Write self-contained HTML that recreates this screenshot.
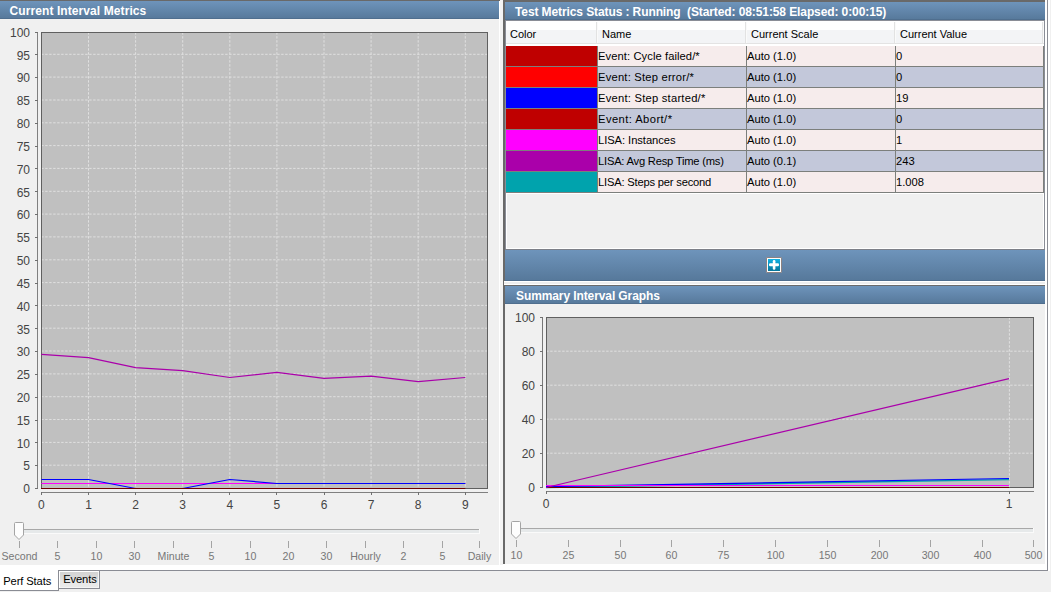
<!DOCTYPE html><html><head><meta charset="utf-8"><style>
html,body{margin:0;padding:0;}
body{width:1051px;height:592px;overflow:hidden;background:#f0f0f0;position:relative;font-family:"Liberation Sans", sans-serif;}
.abs{position:absolute;}
.title{position:absolute;color:#fff;font-weight:bold;font-size:12px;line-height:14px;white-space:nowrap;letter-spacing:-0.1px;}
.hdr{position:absolute;background:linear-gradient(#6e94bb,#56789a);}
.t{position:absolute;white-space:nowrap;}
</style></head><body>

<div class="abs" style="left:0;top:0;width:1047px;height:570px;background:#fff;"></div>
<div class="abs" style="left:1047px;top:0;width:1px;height:571px;background:#8a8c94;"></div>
<div class="abs" style="left:1048px;top:0;width:2px;height:571px;background:#fff;"></div>
<div class="abs" style="left:0;top:570px;width:1048px;height:1px;background:#8a8c94;"></div>
<div class="abs" style="left:0;top:0;width:499px;height:565px;background:#f0f0f0;"></div>
<div class="abs" style="left:0;top:0;width:500px;height:1px;background:#696969;"></div>
<div class="hdr" style="left:0;top:1px;width:499px;height:18px;"></div>
<div class="abs" style="left:0;top:18px;width:499px;height:1px;background:#4f6e8e;"></div>
<div class="title" style="left:9.5px;top:4px;letter-spacing:0.09px;">Current Interval Metrics</div>
<div class="abs" style="left:500px;top:0;width:3px;height:565px;background:#f3f3f3;"></div>
<div class="abs" style="left:503px;top:0;width:542px;height:564px;background:#f0f0f0;"></div>
<div class="abs" style="left:503px;top:0;width:2px;height:564px;background:#696969;"></div>
<div class="abs" style="left:503px;top:0;width:542px;height:2px;background:#696969;"></div>
<div class="hdr" style="left:505px;top:2px;width:540px;height:18px;"></div>
<div class="abs" style="left:505px;top:19px;width:540px;height:1px;background:#4f6e8e;"></div>
<div class="abs" style="left:1045px;top:0px;width:2px;height:565px;background:#fff;"></div>
<div class="title" style="left:515px;top:5px;">Test Metrics Status : Running&nbsp; (Started: 08:51:58 Elapsed: 0:00:15)</div>
<div class="abs" style="left:505px;top:20px;width:540px;height:230px;box-sizing:border-box;border:1px solid #8a8d96;background:#fff;"></div>
<div class="abs" style="left:507px;top:194px;width:536px;height:54px;background:#f0f0f0;"></div>
<div class="abs" style="left:506px;top:21px;width:538px;height:25px;background:linear-gradient(#fff 0,#fff 9px,#f3f4f6 9px,#f3f4f6 22px,#e3e3e3 22px,#e3e3e3 23px,#fff 23px);"></div>
<div class="abs" style="left:596px;top:22px;width:1px;height:21px;background:#e2e2e2;"></div>
<div class="abs" style="left:597px;top:22px;width:1px;height:21px;background:#fafafa;"></div>
<div class="t" style="left:510px;top:28px;font-size:11px;line-height:13px;color:#000;">Color</div>
<div class="abs" style="left:745px;top:22px;width:1px;height:21px;background:#e2e2e2;"></div>
<div class="abs" style="left:746px;top:22px;width:1px;height:21px;background:#fafafa;"></div>
<div class="t" style="left:602px;top:28px;font-size:11px;line-height:13px;color:#000;">Name</div>
<div class="abs" style="left:894px;top:22px;width:1px;height:21px;background:#e2e2e2;"></div>
<div class="abs" style="left:895px;top:22px;width:1px;height:21px;background:#fafafa;"></div>
<div class="t" style="left:751px;top:28px;font-size:11px;line-height:13px;color:#000;">Current Scale</div>
<div class="abs" style="left:1042px;top:22px;width:1px;height:21px;background:#e2e2e2;"></div>
<div class="abs" style="left:1043px;top:22px;width:1px;height:21px;background:#fafafa;"></div>
<div class="t" style="left:900px;top:28px;font-size:11px;line-height:13px;color:#000;">Current Value</div>
<div class="abs" style="left:506px;top:46px;width:538px;height:147px;background:#7c7f7c;"></div>
<div class="abs" style="left:506px;top:46px;width:91px;height:20px;background:#bf0000;"></div>
<div class="abs" style="left:598px;top:46px;width:148px;height:20px;background:#f6ecec;"></div>
<div class="t" style="left:598px;top:50px;font-size:11.2px;line-height:13px;color:#000;letter-spacing:0.08px;">Event: Cycle failed/*</div>
<div class="abs" style="left:747px;top:46px;width:148px;height:20px;background:#f6ecec;"></div>
<div class="t" style="left:747px;top:50px;font-size:11.2px;line-height:13px;color:#000;letter-spacing:0px;">Auto (1.0)</div>
<div class="abs" style="left:896px;top:46px;width:147px;height:20px;background:#f6ecec;"></div>
<div class="t" style="left:896px;top:50px;font-size:11.2px;line-height:13px;color:#000;letter-spacing:0px;">0</div>
<div class="abs" style="left:506px;top:67px;width:91px;height:20px;background:#ff0000;"></div>
<div class="abs" style="left:598px;top:67px;width:148px;height:20px;background:#c3c8da;"></div>
<div class="t" style="left:598px;top:71px;font-size:11.2px;line-height:13px;color:#000;letter-spacing:0.21px;">Event: Step error/*</div>
<div class="abs" style="left:747px;top:67px;width:148px;height:20px;background:#c3c8da;"></div>
<div class="t" style="left:747px;top:71px;font-size:11.2px;line-height:13px;color:#000;letter-spacing:0px;">Auto (1.0)</div>
<div class="abs" style="left:896px;top:67px;width:147px;height:20px;background:#c3c8da;"></div>
<div class="t" style="left:896px;top:71px;font-size:11.2px;line-height:13px;color:#000;letter-spacing:0px;">0</div>
<div class="abs" style="left:506px;top:88px;width:91px;height:20px;background:#0000ff;"></div>
<div class="abs" style="left:598px;top:88px;width:148px;height:20px;background:#f6ecec;"></div>
<div class="t" style="left:598px;top:92px;font-size:11.2px;line-height:13px;color:#000;letter-spacing:0.235px;">Event: Step started/*</div>
<div class="abs" style="left:747px;top:88px;width:148px;height:20px;background:#f6ecec;"></div>
<div class="t" style="left:747px;top:92px;font-size:11.2px;line-height:13px;color:#000;letter-spacing:0px;">Auto (1.0)</div>
<div class="abs" style="left:896px;top:88px;width:147px;height:20px;background:#f6ecec;"></div>
<div class="t" style="left:896px;top:92px;font-size:11.2px;line-height:13px;color:#000;letter-spacing:0px;">19</div>
<div class="abs" style="left:506px;top:109px;width:91px;height:20px;background:#bf0000;"></div>
<div class="abs" style="left:598px;top:109px;width:148px;height:20px;background:#c3c8da;"></div>
<div class="t" style="left:598px;top:113px;font-size:11.2px;line-height:13px;color:#000;letter-spacing:0.43px;">Event: Abort/*</div>
<div class="abs" style="left:747px;top:109px;width:148px;height:20px;background:#c3c8da;"></div>
<div class="t" style="left:747px;top:113px;font-size:11.2px;line-height:13px;color:#000;letter-spacing:0px;">Auto (1.0)</div>
<div class="abs" style="left:896px;top:109px;width:147px;height:20px;background:#c3c8da;"></div>
<div class="t" style="left:896px;top:113px;font-size:11.2px;line-height:13px;color:#000;letter-spacing:0px;">0</div>
<div class="abs" style="left:506px;top:130px;width:91px;height:20px;background:#ff00ff;"></div>
<div class="abs" style="left:598px;top:130px;width:148px;height:20px;background:#f6ecec;"></div>
<div class="t" style="left:598px;top:134px;font-size:11.2px;line-height:13px;color:#000;letter-spacing:-0.06px;">LISA: Instances</div>
<div class="abs" style="left:747px;top:130px;width:148px;height:20px;background:#f6ecec;"></div>
<div class="t" style="left:747px;top:134px;font-size:11.2px;line-height:13px;color:#000;letter-spacing:0px;">Auto (1.0)</div>
<div class="abs" style="left:896px;top:130px;width:147px;height:20px;background:#f6ecec;"></div>
<div class="t" style="left:896px;top:134px;font-size:11.2px;line-height:13px;color:#000;letter-spacing:0px;">1</div>
<div class="abs" style="left:506px;top:151px;width:91px;height:20px;background:#aa00aa;"></div>
<div class="abs" style="left:598px;top:151px;width:148px;height:20px;background:#c3c8da;"></div>
<div class="t" style="left:598px;top:155px;font-size:11.2px;line-height:13px;color:#000;letter-spacing:-0.22px;">LISA: Avg Resp Time (ms)</div>
<div class="abs" style="left:747px;top:151px;width:148px;height:20px;background:#c3c8da;"></div>
<div class="t" style="left:747px;top:155px;font-size:11.2px;line-height:13px;color:#000;letter-spacing:0px;">Auto (0.1)</div>
<div class="abs" style="left:896px;top:151px;width:147px;height:20px;background:#c3c8da;"></div>
<div class="t" style="left:896px;top:155px;font-size:11.2px;line-height:13px;color:#000;letter-spacing:0px;">243</div>
<div class="abs" style="left:506px;top:172px;width:91px;height:20px;background:#00a3ad;"></div>
<div class="abs" style="left:598px;top:172px;width:148px;height:20px;background:#f6ecec;"></div>
<div class="t" style="left:598px;top:176px;font-size:11.2px;line-height:13px;color:#000;letter-spacing:-0.2px;">LISA: Steps per second</div>
<div class="abs" style="left:747px;top:172px;width:148px;height:20px;background:#f6ecec;"></div>
<div class="t" style="left:747px;top:176px;font-size:11.2px;line-height:13px;color:#000;letter-spacing:0px;">Auto (1.0)</div>
<div class="abs" style="left:896px;top:172px;width:147px;height:20px;background:#f6ecec;"></div>
<div class="t" style="left:896px;top:176px;font-size:11.2px;line-height:13px;color:#000;letter-spacing:0px;">1.008</div>
<div class="abs" style="left:505px;top:249px;width:540px;height:1px;background:#7d8088;"></div>
<div class="abs" style="left:505px;top:250px;width:540px;height:31px;background:linear-gradient(#6e94bb,#56789a);"></div>
<div class="abs" style="left:505px;top:280px;width:540px;height:1px;background:#4f6e8e;"></div>
<svg class="abs" style="left:766px;top:257px;" width="16" height="16" viewBox="0 0 16 16">
<defs><linearGradient id="pg" x1="0" y1="0" x2="0" y2="1"><stop offset="0" stop-color="#10b2e4"/><stop offset="1" stop-color="#07759a"/></linearGradient></defs>
<rect x="0.5" y="0.5" width="15" height="15" rx="0.6" fill="#fdfdfd" stroke="#8c8282"/>
<rect x="2" y="2" width="12" height="12" fill="url(#pg)"/>
<rect x="3" y="6.3" width="10" height="3" rx="1.2" fill="#fff"/>
<rect x="6.8" y="3" width="2.6" height="9.8" rx="1.2" fill="#fff"/>
</svg>
<div class="abs" style="left:504px;top:281px;width:541px;height:4px;background:linear-gradient(#fff 0,#fff 1px,#eee 1px,#eee 3px,#fff 3px);"></div>
<div class="abs" style="left:503px;top:285px;width:542px;height:1px;background:#6a6a6a;"></div>
<div class="hdr" style="left:505px;top:286px;width:540px;height:18px;"></div>
<div class="abs" style="left:505px;top:303px;width:540px;height:1px;background:#4f6e8e;"></div>
<div class="title" style="left:516px;top:289px;">Summary Interval Graphs</div>
<svg class="abs" style="left:0;top:0;" width="1051" height="592" viewBox="0 0 1051 592" font-family='"Liberation Sans", sans-serif'>
<rect x="41" y="32" width="447" height="457" fill="#c0c0c0"/>
<line x1="41" y1="465.2" x2="487" y2="465.2" stroke="#e0e0e0" stroke-width="1" stroke-dasharray="2.4,1.6" stroke-dashoffset="-0.2"/>
<line x1="41" y1="442.4" x2="487" y2="442.4" stroke="#e0e0e0" stroke-width="1" stroke-dasharray="2.4,1.6" stroke-dashoffset="-0.2"/>
<line x1="41" y1="419.5" x2="487" y2="419.5" stroke="#e0e0e0" stroke-width="1" stroke-dasharray="2.4,1.6" stroke-dashoffset="-0.2"/>
<line x1="41" y1="396.7" x2="487" y2="396.7" stroke="#e0e0e0" stroke-width="1" stroke-dasharray="2.4,1.6" stroke-dashoffset="-0.2"/>
<line x1="41" y1="373.9" x2="487" y2="373.9" stroke="#e0e0e0" stroke-width="1" stroke-dasharray="2.4,1.6" stroke-dashoffset="-0.2"/>
<line x1="41" y1="351.0" x2="487" y2="351.0" stroke="#e0e0e0" stroke-width="1" stroke-dasharray="2.4,1.6" stroke-dashoffset="-0.2"/>
<line x1="41" y1="328.2" x2="487" y2="328.2" stroke="#e0e0e0" stroke-width="1" stroke-dasharray="2.4,1.6" stroke-dashoffset="-0.2"/>
<line x1="41" y1="305.4" x2="487" y2="305.4" stroke="#e0e0e0" stroke-width="1" stroke-dasharray="2.4,1.6" stroke-dashoffset="-0.2"/>
<line x1="41" y1="282.6" x2="487" y2="282.6" stroke="#e0e0e0" stroke-width="1" stroke-dasharray="2.4,1.6" stroke-dashoffset="-0.2"/>
<line x1="41" y1="259.8" x2="487" y2="259.8" stroke="#e0e0e0" stroke-width="1" stroke-dasharray="2.4,1.6" stroke-dashoffset="-0.2"/>
<line x1="41" y1="236.9" x2="487" y2="236.9" stroke="#e0e0e0" stroke-width="1" stroke-dasharray="2.4,1.6" stroke-dashoffset="-0.2"/>
<line x1="41" y1="214.1" x2="487" y2="214.1" stroke="#e0e0e0" stroke-width="1" stroke-dasharray="2.4,1.6" stroke-dashoffset="-0.2"/>
<line x1="41" y1="191.3" x2="487" y2="191.3" stroke="#e0e0e0" stroke-width="1" stroke-dasharray="2.4,1.6" stroke-dashoffset="-0.2"/>
<line x1="41" y1="168.4" x2="487" y2="168.4" stroke="#e0e0e0" stroke-width="1" stroke-dasharray="2.4,1.6" stroke-dashoffset="-0.2"/>
<line x1="41" y1="145.6" x2="487" y2="145.6" stroke="#e0e0e0" stroke-width="1" stroke-dasharray="2.4,1.6" stroke-dashoffset="-0.2"/>
<line x1="41" y1="122.8" x2="487" y2="122.8" stroke="#e0e0e0" stroke-width="1" stroke-dasharray="2.4,1.6" stroke-dashoffset="-0.2"/>
<line x1="41" y1="100.0" x2="487" y2="100.0" stroke="#e0e0e0" stroke-width="1" stroke-dasharray="2.4,1.6" stroke-dashoffset="-0.2"/>
<line x1="41" y1="77.1" x2="487" y2="77.1" stroke="#e0e0e0" stroke-width="1" stroke-dasharray="2.4,1.6" stroke-dashoffset="-0.2"/>
<line x1="41" y1="54.3" x2="487" y2="54.3" stroke="#e0e0e0" stroke-width="1" stroke-dasharray="2.4,1.6" stroke-dashoffset="-0.2"/>
<line x1="88.5" y1="32" x2="88.5" y2="488" stroke="#e0e0e0" stroke-width="1" stroke-dasharray="2.4,1.6" stroke-dashoffset="-0.2"/>
<line x1="135.6" y1="32" x2="135.6" y2="488" stroke="#e0e0e0" stroke-width="1" stroke-dasharray="2.4,1.6" stroke-dashoffset="-0.2"/>
<line x1="182.7" y1="32" x2="182.7" y2="488" stroke="#e0e0e0" stroke-width="1" stroke-dasharray="2.4,1.6" stroke-dashoffset="-0.2"/>
<line x1="229.8" y1="32" x2="229.8" y2="488" stroke="#e0e0e0" stroke-width="1" stroke-dasharray="2.4,1.6" stroke-dashoffset="-0.2"/>
<line x1="276.9" y1="32" x2="276.9" y2="488" stroke="#e0e0e0" stroke-width="1" stroke-dasharray="2.4,1.6" stroke-dashoffset="-0.2"/>
<line x1="324.0" y1="32" x2="324.0" y2="488" stroke="#e0e0e0" stroke-width="1" stroke-dasharray="2.4,1.6" stroke-dashoffset="-0.2"/>
<line x1="371.1" y1="32" x2="371.1" y2="488" stroke="#e0e0e0" stroke-width="1" stroke-dasharray="2.4,1.6" stroke-dashoffset="-0.2"/>
<line x1="418.2" y1="32" x2="418.2" y2="488" stroke="#e0e0e0" stroke-width="1" stroke-dasharray="2.4,1.6" stroke-dashoffset="-0.2"/>
<line x1="465.3" y1="32" x2="465.3" y2="488" stroke="#e0e0e0" stroke-width="1" stroke-dasharray="2.4,1.6" stroke-dashoffset="-0.2"/>
<rect x="41.5" y="32.5" width="446" height="456" fill="none" stroke="#606060" stroke-width="1"/>
<line x1="37.5" y1="32" x2="37.5" y2="489" stroke="#808080"/>
<line x1="35" y1="488.5" x2="38" y2="488.5" stroke="#707070"/>
<text x="30" y="493" font-size="12" fill="#444" text-anchor="end">0</text>
<line x1="35" y1="465.5" x2="38" y2="465.5" stroke="#707070"/>
<text x="30" y="470" font-size="12" fill="#444" text-anchor="end">5</text>
<line x1="35" y1="442.5" x2="38" y2="442.5" stroke="#707070"/>
<text x="30" y="448" font-size="12" fill="#444" text-anchor="end">10</text>
<line x1="35" y1="420.5" x2="38" y2="420.5" stroke="#707070"/>
<text x="30" y="425" font-size="12" fill="#444" text-anchor="end">15</text>
<line x1="35" y1="397.5" x2="38" y2="397.5" stroke="#707070"/>
<text x="30" y="402" font-size="12" fill="#444" text-anchor="end">20</text>
<line x1="35" y1="374.5" x2="38" y2="374.5" stroke="#707070"/>
<text x="30" y="379" font-size="12" fill="#444" text-anchor="end">25</text>
<line x1="35" y1="351.5" x2="38" y2="351.5" stroke="#707070"/>
<text x="30" y="356" font-size="12" fill="#444" text-anchor="end">30</text>
<line x1="35" y1="328.5" x2="38" y2="328.5" stroke="#707070"/>
<text x="30" y="334" font-size="12" fill="#444" text-anchor="end">35</text>
<line x1="35" y1="305.5" x2="38" y2="305.5" stroke="#707070"/>
<text x="30" y="311" font-size="12" fill="#444" text-anchor="end">40</text>
<line x1="35" y1="283.5" x2="38" y2="283.5" stroke="#707070"/>
<text x="30" y="288" font-size="12" fill="#444" text-anchor="end">45</text>
<line x1="35" y1="260.5" x2="38" y2="260.5" stroke="#707070"/>
<text x="30" y="265" font-size="12" fill="#444" text-anchor="end">50</text>
<line x1="35" y1="237.5" x2="38" y2="237.5" stroke="#707070"/>
<text x="30" y="242" font-size="12" fill="#444" text-anchor="end">55</text>
<line x1="35" y1="214.5" x2="38" y2="214.5" stroke="#707070"/>
<text x="30" y="219" font-size="12" fill="#444" text-anchor="end">60</text>
<line x1="35" y1="191.5" x2="38" y2="191.5" stroke="#707070"/>
<text x="30" y="197" font-size="12" fill="#444" text-anchor="end">65</text>
<line x1="35" y1="168.5" x2="38" y2="168.5" stroke="#707070"/>
<text x="30" y="174" font-size="12" fill="#444" text-anchor="end">70</text>
<line x1="35" y1="146.5" x2="38" y2="146.5" stroke="#707070"/>
<text x="30" y="151" font-size="12" fill="#444" text-anchor="end">75</text>
<line x1="35" y1="123.5" x2="38" y2="123.5" stroke="#707070"/>
<text x="30" y="128" font-size="12" fill="#444" text-anchor="end">80</text>
<line x1="35" y1="100.5" x2="38" y2="100.5" stroke="#707070"/>
<text x="30" y="105" font-size="12" fill="#444" text-anchor="end">85</text>
<line x1="35" y1="77.5" x2="38" y2="77.5" stroke="#707070"/>
<text x="30" y="82" font-size="12" fill="#444" text-anchor="end">90</text>
<line x1="35" y1="54.5" x2="38" y2="54.5" stroke="#707070"/>
<text x="30" y="60" font-size="12" fill="#444" text-anchor="end">95</text>
<line x1="35" y1="32.5" x2="38" y2="32.5" stroke="#707070"/>
<text x="30" y="37" font-size="12" fill="#444" text-anchor="end">100</text>
<line x1="41" y1="492.5" x2="488" y2="492.5" stroke="#808080"/>
<line x1="41.5" y1="492" x2="41.5" y2="495" stroke="#707070"/>
<text x="41.4" y="508.5" font-size="12" fill="#444" text-anchor="middle">0</text>
<line x1="88.5" y1="492" x2="88.5" y2="495" stroke="#707070"/>
<text x="88.5" y="508.5" font-size="12" fill="#444" text-anchor="middle">1</text>
<line x1="135.5" y1="492" x2="135.5" y2="495" stroke="#707070"/>
<text x="135.6" y="508.5" font-size="12" fill="#444" text-anchor="middle">2</text>
<line x1="182.5" y1="492" x2="182.5" y2="495" stroke="#707070"/>
<text x="182.7" y="508.5" font-size="12" fill="#444" text-anchor="middle">3</text>
<line x1="229.5" y1="492" x2="229.5" y2="495" stroke="#707070"/>
<text x="229.8" y="508.5" font-size="12" fill="#444" text-anchor="middle">4</text>
<line x1="276.5" y1="492" x2="276.5" y2="495" stroke="#707070"/>
<text x="276.9" y="508.5" font-size="12" fill="#444" text-anchor="middle">5</text>
<line x1="324.5" y1="492" x2="324.5" y2="495" stroke="#707070"/>
<text x="324.0" y="508.5" font-size="12" fill="#444" text-anchor="middle">6</text>
<line x1="371.5" y1="492" x2="371.5" y2="495" stroke="#707070"/>
<text x="371.1" y="508.5" font-size="12" fill="#444" text-anchor="middle">7</text>
<line x1="418.5" y1="492" x2="418.5" y2="495" stroke="#707070"/>
<text x="418.2" y="508.5" font-size="12" fill="#444" text-anchor="middle">8</text>
<line x1="465.5" y1="492" x2="465.5" y2="495" stroke="#707070"/>
<text x="465.3" y="508.5" font-size="12" fill="#444" text-anchor="middle">9</text>
<polyline points="41.4,483.5 88.5,483.5 135.6,483.5 182.7,483.5 229.8,483.5 276.9,483.5 324.0,483.5 371.1,483.5 418.2,483.5 465.3,483.5" fill="none" stroke="#ff00ff" stroke-width="1.2" stroke-linejoin="round"/>
<polyline points="41.4,479.5 88.5,479.5 135.6,488.5 182.7,488.5 229.8,479.5 276.9,483.5 324.0,483.5 371.1,483.5 418.2,483.5 465.3,483.5" fill="none" stroke="#0000ff" stroke-width="1.2" stroke-linejoin="round"/>
<polyline points="41.0,488.5 465.3,488.5" fill="none" stroke="#700000" stroke-width="1.1" stroke-linejoin="round"/>
<polyline points="41.4,354.4 88.5,357.6 135.6,367.7 182.7,370.6 229.8,377.5 276.9,372.4 324.0,378.4 371.1,376.1 418.2,381.6 465.3,377.5" fill="none" stroke="#aa00aa" stroke-width="1.2" stroke-linejoin="round"/>
<rect x="546" y="317" width="488" height="171" fill="#c0c0c0"/>
<line x1="546" y1="453.2" x2="1033" y2="453.2" stroke="#e0e0e0" stroke-width="1" stroke-dasharray="2.4,1.6" stroke-dashoffset="-0.2"/>
<line x1="546" y1="419.2" x2="1033" y2="419.2" stroke="#e0e0e0" stroke-width="1" stroke-dasharray="2.4,1.6" stroke-dashoffset="-0.2"/>
<line x1="546" y1="385.2" x2="1033" y2="385.2" stroke="#e0e0e0" stroke-width="1" stroke-dasharray="2.4,1.6" stroke-dashoffset="-0.2"/>
<line x1="546" y1="351.2" x2="1033" y2="351.2" stroke="#e0e0e0" stroke-width="1" stroke-dasharray="2.4,1.6" stroke-dashoffset="-0.2"/>
<line x1="1009.4" y1="317" x2="1009.4" y2="487" stroke="#e0e0e0" stroke-width="1" stroke-dasharray="2.4,1.6" stroke-dashoffset="-0.2"/>
<rect x="546.5" y="317.5" width="487" height="170" fill="none" stroke="#606060" stroke-width="1"/>
<line x1="542.5" y1="317" x2="542.5" y2="488" stroke="#777"/>
<line x1="540" y1="487.5" x2="543" y2="487.5" stroke="#707070"/>
<text x="535" y="491.5" font-size="12" fill="#444" text-anchor="end">0</text>
<line x1="540" y1="453.5" x2="543" y2="453.5" stroke="#707070"/>
<text x="535" y="457.5" font-size="12" fill="#444" text-anchor="end">20</text>
<line x1="540" y1="419.5" x2="543" y2="419.5" stroke="#707070"/>
<text x="535" y="423.5" font-size="12" fill="#444" text-anchor="end">40</text>
<line x1="540" y1="385.5" x2="543" y2="385.5" stroke="#707070"/>
<text x="535" y="389.5" font-size="12" fill="#444" text-anchor="end">60</text>
<line x1="540" y1="351.5" x2="543" y2="351.5" stroke="#707070"/>
<text x="535" y="355.5" font-size="12" fill="#444" text-anchor="end">80</text>
<line x1="540" y1="317.5" x2="543" y2="317.5" stroke="#707070"/>
<text x="535" y="321.5" font-size="12" fill="#444" text-anchor="end">100</text>
<line x1="546" y1="491.5" x2="1034" y2="491.5" stroke="#808080"/>
<line x1="546.5" y1="491" x2="546.5" y2="494" stroke="#707070"/>
<text x="546" y="508" font-size="12" fill="#444" text-anchor="middle">0</text>
<line x1="1009.5" y1="491" x2="1009.5" y2="494" stroke="#707070"/>
<text x="1009" y="508" font-size="12" fill="#444" text-anchor="middle">1</text>
<polyline points="546.0,487.5 1009.0,479.6" fill="none" stroke="#00a3ad" stroke-width="1.4" stroke-linejoin="round"/>
<polyline points="546.0,486.6 1009.0,478.5" fill="none" stroke="#0000ff" stroke-width="1.2" stroke-linejoin="round"/>
<polyline points="546.0,485.5 1009.0,485.5" fill="none" stroke="#ff00ff" stroke-width="1.1" stroke-linejoin="round"/>
<polyline points="546.0,487.5 1009.0,487.5" fill="none" stroke="#700000" stroke-width="1.1" stroke-linejoin="round"/>
<polyline points="546.0,487.5 1009.0,378.6" fill="none" stroke="#aa00aa" stroke-width="1.2" stroke-linejoin="round"/>
<g transform="translate(0,0)"><rect x="19" y="529" width="460" height="5" fill="#e6e9ea"/><line x1="19" y1="529.5" x2="479" y2="529.5" stroke="#a8a8a8"/><line x1="19" y1="533.5" x2="480" y2="533.5" stroke="#fafafa"/><line x1="479.5" y1="529" x2="479.5" y2="534" stroke="#fafafa"/><path d="M14.5,523.5 Q14.5,522.5 15.5,522.5 L22.5,522.5 Q23.5,522.5 23.5,523.5 L23.5,535 L19,539.5 L14.5,535 Z" fill="#fdfdfd" stroke="#a4a4a4"/><line x1="19.5" y1="541" x2="19.5" y2="548" stroke="#a4a4a4"/><text x="19.5" y="559.6" font-size="10.6" fill="#777" text-anchor="middle">Second</text><line x1="57.5" y1="541" x2="57.5" y2="548" stroke="#a4a4a4"/><text x="57.5" y="559.6" font-size="10.6" fill="#777" text-anchor="middle">5</text><line x1="96.5" y1="541" x2="96.5" y2="548" stroke="#a4a4a4"/><text x="96.5" y="559.6" font-size="10.6" fill="#777" text-anchor="middle">10</text><line x1="134.5" y1="541" x2="134.5" y2="548" stroke="#a4a4a4"/><text x="134.5" y="559.6" font-size="10.6" fill="#777" text-anchor="middle">30</text><line x1="173.5" y1="541" x2="173.5" y2="548" stroke="#a4a4a4"/><text x="173.5" y="559.6" font-size="10.6" fill="#777" text-anchor="middle">Minute</text><line x1="211.5" y1="541" x2="211.5" y2="548" stroke="#a4a4a4"/><text x="211.5" y="559.6" font-size="10.6" fill="#777" text-anchor="middle">5</text><line x1="250.5" y1="541" x2="250.5" y2="548" stroke="#a4a4a4"/><text x="250.5" y="559.6" font-size="10.6" fill="#777" text-anchor="middle">10</text><line x1="288.5" y1="541" x2="288.5" y2="548" stroke="#a4a4a4"/><text x="288.5" y="559.6" font-size="10.6" fill="#777" text-anchor="middle">20</text><line x1="326.5" y1="541" x2="326.5" y2="548" stroke="#a4a4a4"/><text x="326.5" y="559.6" font-size="10.6" fill="#777" text-anchor="middle">30</text><line x1="365.5" y1="541" x2="365.5" y2="548" stroke="#a4a4a4"/><text x="365.5" y="559.6" font-size="10.6" fill="#777" text-anchor="middle">Hourly</text><line x1="403.5" y1="541" x2="403.5" y2="548" stroke="#a4a4a4"/><text x="403.5" y="559.6" font-size="10.6" fill="#777" text-anchor="middle">2</text><line x1="442.5" y1="541" x2="442.5" y2="548" stroke="#a4a4a4"/><text x="442.5" y="559.6" font-size="10.6" fill="#777" text-anchor="middle">5</text><line x1="479.5" y1="541" x2="479.5" y2="548" stroke="#a4a4a4"/><text x="479.5" y="559.6" font-size="10.6" fill="#777" text-anchor="middle">Daily</text></g>
<g transform="translate(0,-1)"><rect x="516" y="529" width="517" height="5" fill="#e6e9ea"/><line x1="516" y1="529.5" x2="1033" y2="529.5" stroke="#a8a8a8"/><line x1="516" y1="533.5" x2="1034" y2="533.5" stroke="#fafafa"/><line x1="1033.5" y1="529" x2="1033.5" y2="534" stroke="#fafafa"/><path d="M511.5,523.5 Q511.5,522.5 512.5,522.5 L519.5,522.5 Q520.5,522.5 520.5,523.5 L520.5,535 L516,539.5 L511.5,535 Z" fill="#fdfdfd" stroke="#a4a4a4"/><line x1="516.5" y1="541" x2="516.5" y2="548" stroke="#a4a4a4"/><text x="516.5" y="559.6" font-size="10.6" fill="#777" text-anchor="middle">10</text><line x1="568.5" y1="541" x2="568.5" y2="548" stroke="#a4a4a4"/><text x="568.5" y="559.6" font-size="10.6" fill="#777" text-anchor="middle">25</text><line x1="620.5" y1="541" x2="620.5" y2="548" stroke="#a4a4a4"/><text x="620.5" y="559.6" font-size="10.6" fill="#777" text-anchor="middle">50</text><line x1="671.5" y1="541" x2="671.5" y2="548" stroke="#a4a4a4"/><text x="671.5" y="559.6" font-size="10.6" fill="#777" text-anchor="middle">60</text><line x1="723.5" y1="541" x2="723.5" y2="548" stroke="#a4a4a4"/><text x="723.5" y="559.6" font-size="10.6" fill="#777" text-anchor="middle">75</text><line x1="775.5" y1="541" x2="775.5" y2="548" stroke="#a4a4a4"/><text x="775.5" y="559.6" font-size="10.6" fill="#777" text-anchor="middle">100</text><line x1="827.5" y1="541" x2="827.5" y2="548" stroke="#a4a4a4"/><text x="827.5" y="559.6" font-size="10.6" fill="#777" text-anchor="middle">150</text><line x1="879.5" y1="541" x2="879.5" y2="548" stroke="#a4a4a4"/><text x="879.5" y="559.6" font-size="10.6" fill="#777" text-anchor="middle">200</text><line x1="930.5" y1="541" x2="930.5" y2="548" stroke="#a4a4a4"/><text x="930.5" y="559.6" font-size="10.6" fill="#777" text-anchor="middle">300</text><line x1="982.5" y1="541" x2="982.5" y2="548" stroke="#a4a4a4"/><text x="982.5" y="559.6" font-size="10.6" fill="#777" text-anchor="middle">400</text><line x1="1033.5" y1="541" x2="1033.5" y2="548" stroke="#a4a4a4"/><text x="1033.5" y="559.6" font-size="10.6" fill="#777" text-anchor="middle">500</text></g>
</svg>
<div class="abs" style="left:0;top:565px;width:58px;height:25px;background:#fff;"></div>
<div class="abs" style="left:0;top:590px;width:59px;height:1px;background:#8a8c94;"></div>
<div class="abs" style="left:58px;top:570px;width:1px;height:21px;background:#8a8c94;"></div>
<div class="abs" style="left:59px;top:570px;width:41px;height:19px;box-sizing:border-box;border:1px solid #8a8c94;border-left:none;background:linear-gradient(#d3d3d3,#d9d9d9 40%,#e6e6e6 60%,#ebebeb);box-shadow:inset 1px 1px #fff, inset -1px -1px #f4f4f4;"></div>
<div class="t" style="left:3.2px;top:574px;font-size:11.2px;letter-spacing:-0.12px;line-height:14px;color:#000;">Perf Stats</div>
<div class="t" style="left:63.2px;top:572px;font-size:11.2px;letter-spacing:-0.12px;line-height:14px;color:#000;">Events</div>
</body></html>
